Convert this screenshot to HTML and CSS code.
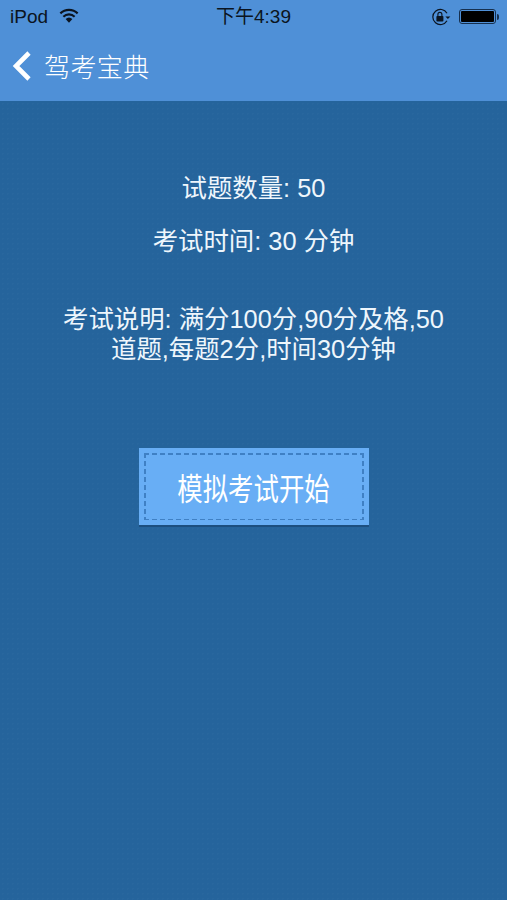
FILE: index.html
```html
<!DOCTYPE html>
<html lang="zh-CN">
<head>
<meta charset="UTF-8">
<meta name="viewport" content="width=device-width, initial-scale=1.0">
<title>驾考宝典</title>
<link rel="stylesheet" href="styles.css">
</head>
<body>
<div class="phone">
    <div class="top">
        <div class="status">
            <div class="status-left">
                <span>iPod</span>
                <svg class="wifi" viewBox="0 0 20 15" width="20" height="15">
                    <path d="M0.6 4.6 A13.5 13.5 0 0 1 19.4 4.6 L17.9 6.3 A11.2 11.2 0 0 0 2.1 6.3 Z" fill="#0b1420"/>
                    <path d="M3.6 7.9 A9.2 9.2 0 0 1 16.4 7.9 L14.9 9.6 A7 7 0 0 0 5.1 9.6 Z" fill="#0b1420"/>
                    <path d="M6.6 11 A5 5 0 0 1 13.4 11 L10 14.8 Z" fill="#0b1420"/>
                </svg>
            </div>
            <div class="status-time">下午4:39</div>
            <div class="status-right">
                <svg class="rotate-lock" viewBox="0 0 20 18" width="20" height="18">
                    <path d="M16 5.2 A7.6 7.6 0 1 0 16 12.8" fill="none" stroke="#0b1420" stroke-width="1.2"/>
                    <path d="M14.4 8.4 H19.4 L16.9 11 Z" fill="#0b1420"/>
                    <rect x="5.4" y="8" width="7" height="5.6" rx="0.8" fill="#0b1420"/>
                    <path d="M6.9 8 V6.4 A2 2 0 0 1 10.9 6.4 V8" fill="none" stroke="#0b1420" stroke-width="1.1"/>
                </svg>
                <div class="battery"><div class="battery-fill"></div></div>
                <div class="battery-tip"></div>
            </div>
        </div>
        <div class="nav">
            <svg class="back" viewBox="0 0 20 32" width="20" height="32">
                <path d="M17 3 L4 16 L17 29" fill="none" stroke="#fff" stroke-width="4.6"/>
            </svg>
            <span class="nav-title">驾考宝典</span>
        </div>
    </div>
    <div class="content">
        <p class="line">试题数量: 50</p>
        <p class="line second">考试时间: 30 分钟</p>
        <p class="note">考试说明: 满分100分,90分及格,50<br>道题,每题2分,时间30分钟</p>
        <button class="start"><span class="start-inner"><span class="start-label">模拟考试开始</span></span></button>
    </div>
</div>
</body>
</html>
```

FILE: styles.css
```css
html, body {
    margin: 0;
    padding: 0;
}
body {
    font-family: "Liberation Sans", "Noto Sans CJK SC", sans-serif;
    background-color: #25649c;
}
.phone {
    width: 507px;
    height: 900px;
    overflow: hidden;
    display: flex;
    flex-direction: column;
}
.top {
    height: 101px;
    background-color: #4f90d7;
}
.status {
    height: 33px;
    display: flex;
    align-items: center;
    justify-content: space-between;
    padding: 0 8px 0 10px;
    color: #0b1420;
    font-size: 19px;
    position: relative;
}
.status-left {
    display: flex;
    align-items: center;
    gap: 11px;
}
.wifi {
    margin-top: -2px;
}
.status-time {
    position: absolute;
    left: 216px;
    top: 6px;
    font-size: 19px;
    line-height: 21px;
}
.status-right {
    display: flex;
    align-items: center;
}
.rotate-lock {
    margin-right: 8px;
}
.battery {
    width: 37px;
    height: 15px;
    box-sizing: border-box;
    border: 1px solid #16304f;
    border-radius: 3px;
    padding: 1px;
}
.battery-fill {
    height: 100%;
    background-color: #000;
    border-radius: 1px;
}
.battery-tip {
    width: 2px;
    height: 6px;
    margin-left: 1px;
    background-color: #16304f;
    border-radius: 0 2px 2px 0;
}
.nav {
    height: 64px;
    display: flex;
    align-items: center;
    padding-left: 12px;
    color: #fff;
}
.back {
    margin: 2px 12px 0 0;
}
.nav-title {
    font-size: 26px;
    letter-spacing: 0.4px;
    font-weight: 300;
}
.content {
    flex: 1;
    display: flex;
    flex-direction: column;
    align-items: center;
    color: #eef6fc;
    font-size: 25.4px;
    text-align: center;
    background-color: #25649c;
    background-image: radial-gradient(rgba(255,255,255,0.02) 1px, transparent 1px);
    background-size: 5px 5px;
}
.line {
    margin: 72px 0 0;
    line-height: 30px;
}
.line.second {
    margin-top: 23px;
}
.note {
    margin: 48px 0 0;
    width: 430px;
    line-height: 30px;
}
.start {
    margin-top: 84px;
    width: 230px;
    height: 79px;
    padding: 5px;
    border: 0;
    border-bottom: 2px solid #1c4f80;
    background-color: #68aef5;
    color: #fff;
    font-family: inherit;
    font-size: 25.4px;
}
.start-inner {
    display: flex;
    align-items: center;
    justify-content: center;
    height: 100%;
    box-sizing: border-box;
    background:
        linear-gradient(to right, #3f80c4 60%, transparent 0) top left / 8px 1.5px repeat-x,
        linear-gradient(to right, #3f80c4 60%, transparent 0) bottom left / 8px 1.5px repeat-x,
        linear-gradient(to bottom, #3f80c4 60%, transparent 0) top left / 1.5px 8px repeat-y,
        linear-gradient(to bottom, #3f80c4 60%, transparent 0) top right / 1.5px 8px repeat-y;
}
.start-label {
    display: inline-block;
    transform: scaleY(1.2);
}
```
